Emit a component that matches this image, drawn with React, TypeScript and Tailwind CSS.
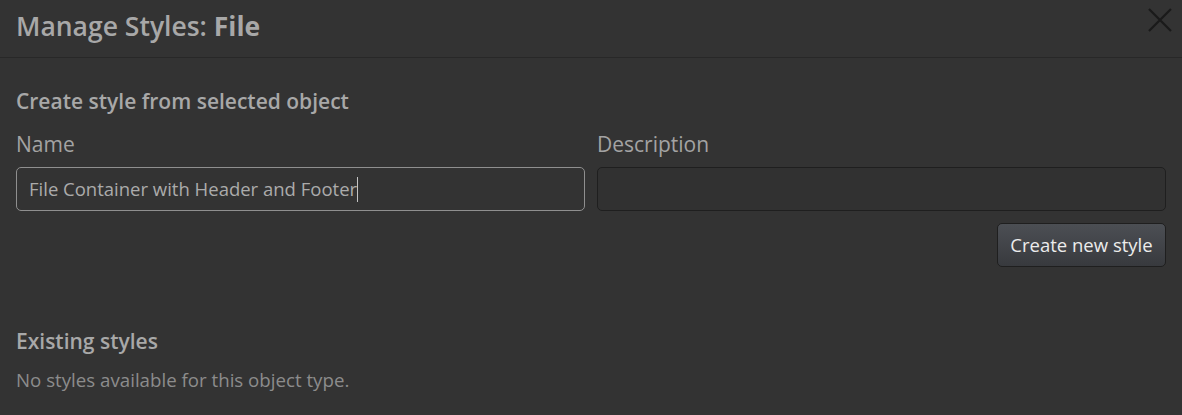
export default function App() {
  return (
    <div
      className="w-[1182px] h-[415px] bg-[#333333] overflow-hidden text-[#a8a8a8]"
      style={{ fontFamily: '"Open Sans", "Noto Sans", sans-serif' }}
    >
      <header className="h-[58px] border-b border-[#282828] flex items-start justify-between pl-4 pr-[10px]">
        <h1 className="pt-[8px] text-[26.5px] leading-[36px] font-semibold text-[#a8a8a8]">
          Manage Styles: <span className="font-bold">File</span>
        </h1>
        <button className="mt-[8px] w-[24px] h-[24px] text-[#1a1a1a]">
          <svg width="24" height="24" viewBox="0 0 24 24" fill="none" stroke="currentColor" strokeWidth="2.2">
            <path d="M1 1 L23 23 M23 1 L1 23" />
          </svg>
        </button>
      </header>

      <main className="px-4 pt-[29px]">
        <h2 className="text-[21px] font-semibold text-[#a8a8a8] leading-[28px]">
          Create style from selected object
        </h2>

        <div className="grid grid-cols-2 gap-3 mt-[15px]">
          <label className="flex flex-col">
            <span className="text-[21px] text-[#a3a3a3] leading-[28px]">Name</span>
            <div className="mt-[9px] h-[44px] rounded-[5px] border border-[#8f8f8f] bg-[#333333] flex items-center pl-[12px] text-[18.5px] text-[#ababab]">
              File Container with Header and Footer
              <span className="inline-block w-px h-[25px] bg-[#c4c4c4]" />
            </div>
          </label>
          <label className="flex flex-col">
            <span className="text-[21px] text-[#a3a3a3] leading-[28px]">Description</span>
            <div className="mt-[9px] h-[44px] rounded-[5px] border border-[#1f1f1f] bg-[#313131]" />
          </label>
        </div>

        <div className="flex justify-end mt-[12px]">
          <button className="h-[44px] w-[169px] flex items-center justify-center rounded-[5px] border border-[#1f1f1f] bg-gradient-to-b from-[#4c4f54] to-[#383a3e] text-[18.5px] text-[#ececec]">
            Create new style
          </button>
        </div>

        <h2 className="mt-[60px] text-[21px] font-semibold text-[#a8a8a8] leading-[28px]">
          Existing styles
        </h2>
        <p className="mt-[12px] text-[18.7px] text-[#8c8c8c] leading-[26px]">
          No styles available for this object type.
        </p>
      </main>
    </div>
  );
}
